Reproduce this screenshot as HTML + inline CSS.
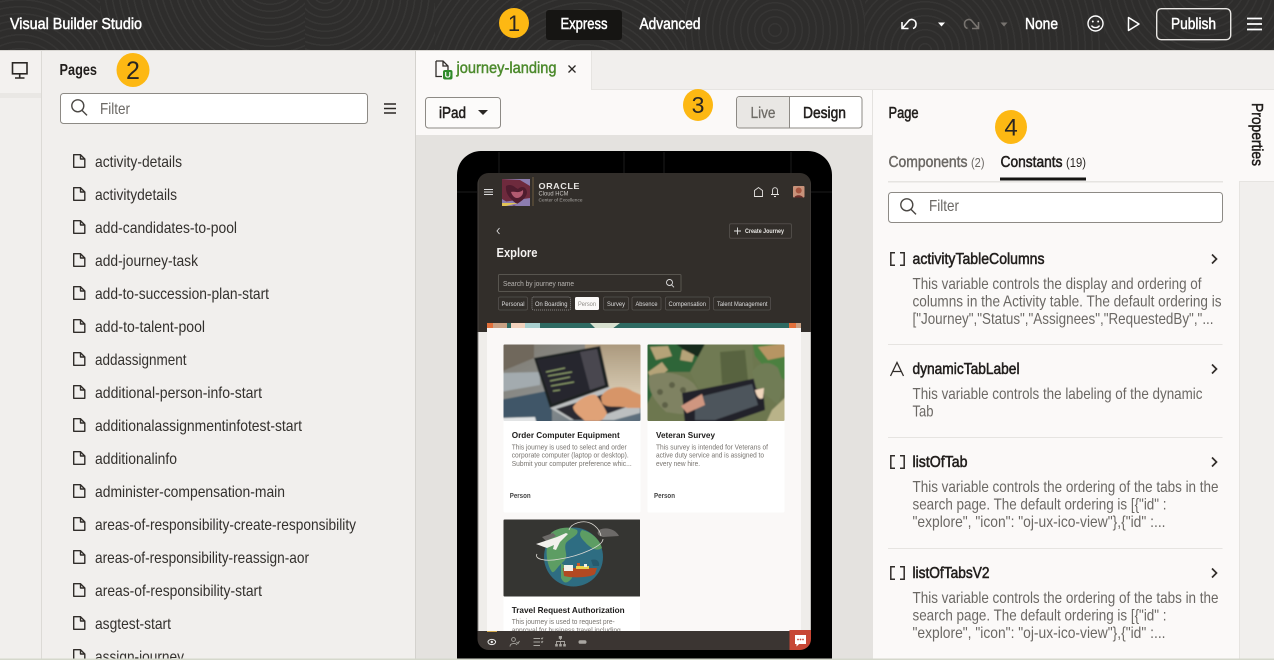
<!DOCTYPE html>
<html lang="en">
<head>
<meta charset="utf-8">
<title>Visual Builder Studio</title>
<style>
html,body{margin:0;padding:0;background:#f1efed;width:1274px;height:660px;overflow:hidden}
svg{display:block;position:absolute;left:0;top:0}
.hd{position:absolute;left:0;top:0;width:1274px;height:50px;background:#2e2d2c;overflow:hidden}
.hd div{position:absolute;top:0;height:50px}
text{font-family:"Liberation Sans",sans-serif;white-space:pre}
.l{font-size:16px;fill:#33302d}
.d{font-size:16px;fill:#6b6864}
.t{font-size:16px;fill:#211e1c;stroke:#211e1c;stroke-width:.55px}
.w{font-size:16px;fill:#fff;stroke:#fff;stroke-width:.5px}
.n{font-size:23px;fill:#2a2622;text-anchor:middle}
.chip{font-size:6px;fill:#ddd}
.ct{font-size:8.5px;font-weight:bold;fill:#1f1c1a}
.cd{font-size:7.3px;fill:#77736e}
.cp{font-size:7px;font-weight:bold;fill:#444}
</style>
</head>
<body>
<div class="hd">
<div style="left:0;width:100px;background:repeating-radial-gradient(circle at 20px 90px,#2e2d2c 0 5.5px,#363534 5.5px 7px)"></div>
<div style="left:100px;width:205px;background:repeating-radial-gradient(circle at 170px -30px,#2e2d2c 0 5.5px,#373635 5.5px 7px)"></div>
<div style="left:305px;width:130px;background:repeating-radial-gradient(circle at 20px -10px,#2e2d2c 0 5.5px,#373635 5.5px 7px)"></div>
<div style="left:435px;width:250px;background:repeating-radial-gradient(circle at 150px 100px,#2e2d2c 0 5.5px,#373635 5.5px 7px)"></div>
<div style="left:685px;width:180px;background:repeating-radial-gradient(circle at 90px 30px,#2e2d2c 0 5.5px,#363534 5.5px 7px)"></div>
<div style="left:865px;width:240px;background:repeating-radial-gradient(circle at 60px 50px,#2e2d2c 0 5.5px,#363534 5.5px 7px)"></div>
<div style="left:1105px;width:169px;background:repeating-radial-gradient(circle at 100px -20px,#2e2d2c 0 5.5px,#363534 5.5px 7px)"></div>
</div>
<svg width="1274" height="660" viewBox="0 0 1274 660" xmlns="http://www.w3.org/2000/svg">
<defs>
<path id="f" d="M.7 .7H7.5L11.8 5V13.3H.7ZM7.5 .7V5H11.8" fill="none" stroke="#312d2a" stroke-width="1.4" stroke-linejoin="round"/>
<g id="br" fill="none" stroke="#312d2a" stroke-width="1.5"><path d="M5 .8H.8V13.2H5M10 .8H14.2V13.2H10"/></g>
<path id="chev" d="M0 0L4.500 4.500L0 9" fill="none" stroke="#312d2a" stroke-width="1.700"/>
<g id="srch" fill="none" stroke="#4a4743" stroke-width="1.400"><circle cx="6.800" cy="6.800" r="6"/><path d="M11 11.400L16 16.400"/></g>
<filter id="b1" x="-5%" y="-5%" width="110%" height="110%"><feGaussianBlur stdDeviation=".35"/></filter>
<filter id="b2" x="-5%" y="-5%" width="110%" height="110%"><feGaussianBlur stdDeviation=".8"/></filter>
<clipPath id="sc"><rect x="477.500" y="173" width="333.500" height="477" rx="11"/></clipPath>
<clipPath id="c3"><rect x="503" y="519" width="137" height="112"/></clipPath>
<clipPath id="i1"><rect x="503.500" y="344.500" width="137" height="76.500" rx="1"/></clipPath>
<clipPath id="i2"><rect x="647.500" y="344.500" width="137" height="76.500" rx="1"/></clipPath>
<clipPath id="i3"><rect x="503.500" y="519.500" width="137" height="77" rx="1"/></clipPath>
<linearGradient id="lap" x1="0" y1="0" x2="1" y2="1"><stop offset="0" stop-color="#7d786d"/><stop offset=".5" stop-color="#8c8f8e"/><stop offset="1" stop-color="#55697a"/></linearGradient>
<linearGradient id="lap2" x1="0" y1="0" x2="0" y2="1"><stop offset="0" stop-color="#a8967a"/><stop offset="1" stop-color="#e0d4bd"/></linearGradient>
</defs>

<!-- base -->
<rect y="50" width="1274" height="610" fill="#f1efed"/>

<!-- header -->
<rect y="50" width="1274" height="1" fill="#d8d6d2"/>
<text class="w" x="10" y="29" textLength="132" lengthAdjust="spacingAndGlyphs">Visual Builder Studio</text>
<rect x="546" y="10" width="76" height="30" rx="3" fill="#161513"/>
<text class="w" x="560.500" y="29" textLength="47" lengthAdjust="spacingAndGlyphs">Express</text>
<text class="w" x="639.500" y="29" textLength="61" lengthAdjust="spacingAndGlyphs">Advanced</text>
<path d="M902 22V28.500H908.500M902.500 28L909 20.500C911 18.500 916 19.500 916 24C916 26.500 914.500 28 913 28.500" fill="none" stroke="#fff" stroke-width="1.600"/>
<path d="M938 22.500H945L941.500 26.500Z" fill="#fff"/>
<path d="M978.500 22V28.500H972M978 28L971.500 20.500C969.500 18.500 964.500 19.500 964.500 24C964.500 26.500 966 28 967.500 28.500" fill="none" stroke="#77736f" stroke-width="1.600"/>
<path d="M1000.500 22.500H1007.500L1004 26.500Z" fill="#77736f"/>
<text class="w" x="1025" y="29" textLength="33" lengthAdjust="spacingAndGlyphs">None</text>
<g fill="none" stroke="#fff" stroke-width="1.400">
<circle cx="1095.500" cy="23.500" r="7.500"/>
<path d="M1091.500 25.500C1093 28.300 1098 28.300 1099.500 25.500"/>
</g>
<circle cx="1092.800" cy="21.500" r="1" fill="#fff"/><circle cx="1098.200" cy="21.500" r="1" fill="#fff"/>
<path d="M1128.500 17.500L1139 24L1128.500 30.500Z" fill="none" stroke="#fff" stroke-width="1.500" stroke-linejoin="round"/>
<rect x="1156.700" y="8.700" width="74" height="31" rx="4.500" fill="none" stroke="#e8e6e3" stroke-width="1.400"/>
<text class="w" x="1171" y="29" textLength="45" lengthAdjust="spacingAndGlyphs">Publish</text>
<path d="M1247 18.500H1262M1247 24H1262M1247 29.500H1262" stroke="#fff" stroke-width="1.700"/>
<circle cx="514" cy="23" r="15" fill="#fdb813"/>
<text class="n" x="514" y="31" style="font-size:22px">1</text>

<!-- left rail -->
<rect x="41" y="51" width="1" height="609" fill="#dcdad6"/>
<rect x="0" y="51" width="41" height="42" fill="#f3f1ef"/>
<rect x="0" y="93" width="41" height="5" fill="#e9e7e4"/>
<g fill="none" stroke="#2a2724" stroke-width="1.600">
<rect x="12.500" y="62.800" width="14.500" height="11"/>
<path d="M19.700 74V78M15 78H24.500"/>
</g>

<!-- pages panel -->
<rect x="415" y="51" width="1" height="609" fill="#d4d2ce"/>
<text x="59.500" y="75" textLength="37.500" lengthAdjust="spacingAndGlyphs" style="font-size:16px;font-weight:bold;fill:#211e1c">Pages</text>
<ellipse cx="133" cy="70" rx="16.500" ry="17" fill="#fdb813"/>
<text class="n" x="133" y="79" style="font-size:25px">2</text>
<rect x="60.500" y="93.500" width="307" height="30" rx="3" fill="#fff" stroke="#8d8a85"/>
<use href="#srch" x="71" y="99"/>
<text class="d" x="100" y="114" textLength="30" lengthAdjust="spacingAndGlyphs">Filter</text>
<path d="M384 104H396M384 108.500H396M384 113H396" stroke="#2a2724" stroke-width="1.600"/>

<g>
<use href="#f" x="73" y="154"/><text class="l" x="95" y="167" textLength="87" lengthAdjust="spacingAndGlyphs">activity-details</text>
<use href="#f" x="73" y="187"/><text class="l" x="95" y="200" textLength="82" lengthAdjust="spacingAndGlyphs">activitydetails</text>
<use href="#f" x="73" y="220"/><text class="l" x="95" y="233" textLength="142" lengthAdjust="spacingAndGlyphs">add-candidates-to-pool</text>
<use href="#f" x="73" y="253"/><text class="l" x="95" y="266" textLength="103" lengthAdjust="spacingAndGlyphs">add-journey-task</text>
<use href="#f" x="73" y="286"/><text class="l" x="95" y="299" textLength="174" lengthAdjust="spacingAndGlyphs">add-to-succession-plan-start</text>
<use href="#f" x="73" y="319"/><text class="l" x="95" y="332" textLength="110" lengthAdjust="spacingAndGlyphs">add-to-talent-pool</text>
<use href="#f" x="73" y="352"/><text class="l" x="95" y="365" textLength="91.500" lengthAdjust="spacingAndGlyphs">addassignment</text>
<use href="#f" x="73" y="385"/><text class="l" x="95" y="398" textLength="167" lengthAdjust="spacingAndGlyphs">additional-person-info-start</text>
<use href="#f" x="73" y="418"/><text class="l" x="95" y="431" textLength="207" lengthAdjust="spacingAndGlyphs">additionalassignmentinfotest-start</text>
<use href="#f" x="73" y="451"/><text class="l" x="95" y="464" textLength="82" lengthAdjust="spacingAndGlyphs">additionalinfo</text>
<use href="#f" x="73" y="484"/><text class="l" x="95" y="497" textLength="190" lengthAdjust="spacingAndGlyphs">administer-compensation-main</text>
<use href="#f" x="73" y="517"/><text class="l" x="95" y="530" textLength="261" lengthAdjust="spacingAndGlyphs">areas-of-responsibility-create-responsibility</text>
<use href="#f" x="73" y="550"/><text class="l" x="95" y="563" textLength="214" lengthAdjust="spacingAndGlyphs">areas-of-responsibility-reassign-aor</text>
<use href="#f" x="73" y="583"/><text class="l" x="95" y="596" textLength="167" lengthAdjust="spacingAndGlyphs">areas-of-responsibility-start</text>
<use href="#f" x="73" y="616"/><text class="l" x="95" y="629" textLength="76" lengthAdjust="spacingAndGlyphs">asgtest-start</text>
<use href="#f" x="73" y="649"/><text class="l" x="95" y="662" textLength="89" lengthAdjust="spacingAndGlyphs">assign-journey</text>
</g>

<!-- tab strip -->
<rect x="416" y="89" width="858" height="1" fill="#e6e4e1"/>
<rect x="416" y="51" width="175" height="39" fill="#fbf9f8"/>
<rect x="591" y="51" width="1" height="39" fill="#e6e4e1"/>
<path d="M436 61H443L448 66V71M436 61V76.500H442M443 61V66H448" fill="none" stroke="#312d2a" stroke-width="1.300"/>
<rect x="443" y="70" width="9.500" height="9.500" rx="2" fill="#2f8a2a"/>
<path d="M445.700 72V75.500C445.700 77.600 449.800 77.600 449.800 75.500V72" fill="none" stroke="#fff" stroke-width="1.100"/>
<text x="456.500" y="73" textLength="100" lengthAdjust="spacingAndGlyphs" style="font-size:16px;fill:#4c8a2c;stroke:#4c8a2c;stroke-width:.45px">journey-landing</text>
<path d="M568.500 65.500L575.500 72.500M575.500 65.500L568.500 72.500" stroke="#2a2724" stroke-width="1.300"/>

<!-- toolbar -->
<rect x="416" y="90" width="457" height="45" fill="#fbf9f8"/>
<rect x="425.500" y="97.500" width="75" height="30.500" rx="3" fill="#fcfbfa" stroke="#8d8a85"/>
<text class="t" x="439" y="118" textLength="27" lengthAdjust="spacingAndGlyphs">iPad</text>
<path d="M478 110H488L483 115Z" fill="#2a2724"/>
<ellipse cx="698" cy="105" rx="15" ry="16" fill="#fdb813"/>
<text class="n" x="698" y="113">3</text>
<rect x="736.500" y="96.500" width="125.500" height="31.500" rx="3" fill="#fff" stroke="#8d8a85"/>
<path d="M739.500 97H789V127.500H739.500Q737 127.500 737 125V99.500Q737 97 739.500 97Z" fill="#e9e7e4"/>
<path d="M789.500 97V128" stroke="#8d8a85"/>
<text x="750.500" y="118" textLength="25" lengthAdjust="spacingAndGlyphs" style="font-size:16px;fill:#6f6c67;stroke:#6f6c67;stroke-width:.3px">Live</text>
<text class="t" x="803" y="118" textLength="43" lengthAdjust="spacingAndGlyphs">Design</text>

<!-- canvas -->
<rect x="416" y="135" width="457" height="525" fill="#e4e2df"/>

<!-- tablet -->
<rect x="457" y="151" width="375" height="530" rx="24" fill="#000"/>
<path d="M499 152V173M624 152V173M664 152V173M791 152V173M457 192H477M811 192H832" stroke="#1d1c1b"/>
<g clip-path="url(#sc)">
<g filter="url(#b1)">
<rect x="477" y="173" width="334" height="160" fill="#312d2a"/>
<rect x="477" y="332" width="334" height="320" fill="#efedea"/>
<path d="M478 173V650M811 173V650" stroke="#55524e" stroke-width=".6"/>
<!-- header -->
<path d="M484 189.500H493M484 192H493M484 194.500H493" stroke="#ddd" stroke-width="1"/>
<rect x="502" y="179" width="28" height="27" fill="#6e2b3d"/>
<path d="M502 179H530V186L520 180ZM502 199L514 206H502ZM503 202L530 198V206H516Z" fill="#8d7db0"/>
<path d="M506 186C512 183 515 188 518 189C521 186 526 186 527 192C527 198 520 202 517 204C511 200 505 194 506 186Z" fill="#4f1c2e"/>
<path d="M511 192C515 191 518 194 523 190C524 195 520 198 517 198C514 198 512 195 511 192Z" fill="#b25a70"/>
<path d="M502 203H518L506 206H502Z" fill="#e2c454"/>
<rect x="532.500" y="177" width="1" height="29" fill="#6d5b3f"/>
<text x="538.500" y="189" textLength="41.500" lengthAdjust="spacingAndGlyphs" style="font-size:8.500px;font-weight:bold;fill:#e8e6e3;letter-spacing:.5px">ORACLE</text>
<text x="538.500" y="195.500" textLength="30" lengthAdjust="spacingAndGlyphs" style="font-size:6px;fill:#c9c6c2">Cloud HCM</text>
<text x="538.500" y="201.500" textLength="44" lengthAdjust="spacingAndGlyphs" style="font-size:4.800px;fill:#a9a6a2">Center of Excellence</text>
<path d="M754.500 196.500V190.500L758.500 187.500L762.500 190.500V196.500Z" fill="none" stroke="#e5e3e0" stroke-width=".9"/>
<path d="M771 194.500H779M772.500 194.500V190.500C772.500 186.700 777.500 186.700 777.500 190.500V194.500M774 196.500H776" fill="none" stroke="#e5e3e0" stroke-width=".9"/>
<rect x="793" y="186" width="11.500" height="11.500" rx="1" fill="#c8927a"/>
<circle cx="798.700" cy="190.500" r="3" fill="#a5553f"/>
<path d="M794.500 197.500C795 194.500 802 194.500 803 197.500Z" fill="#6e2f2a"/>
<path d="M499.500 228L497 231L499.500 234" fill="none" stroke="#ddd" stroke-width=".9"/>
<rect x="729.500" y="223.800" width="62" height="14.500" rx="1.500" fill="none" stroke="#4f4b47"/>
<path d="M737.500 227.500V234.500M734 231H741" stroke="#ddd" stroke-width=".9"/>
<text x="745" y="233" textLength="39" lengthAdjust="spacingAndGlyphs" style="font-size:6px;font-weight:bold;fill:#e8e6e3">Create Journey</text>
<text x="496.500" y="257" textLength="41" lengthAdjust="spacingAndGlyphs" style="font-size:12.500px;font-weight:bold;fill:#f5f3f1">Explore</text>
<rect x="498.500" y="274.500" width="182.500" height="17" rx="1" fill="none" stroke="#58544f"/>
<text x="503" y="286" textLength="71" lengthAdjust="spacingAndGlyphs" style="font-size:7px;fill:#b8b5b1">Search by journey name</text>
<circle cx="669.500" cy="282.500" r="3" fill="none" stroke="#ddd" stroke-width=".9"/><path d="M671.500 284.800L674 287.300" stroke="#ddd" stroke-width=".9"/>
<g fill="none" stroke="#56524e" stroke-width=".8">
<rect x="498.500" y="297" width="29" height="13" rx="1.500"/>
<rect x="603.500" y="297" width="25" height="13" rx="1.500"/>
<rect x="632" y="297" width="29" height="13" rx="1.500"/>
<rect x="665.500" y="297" width="44" height="13" rx="1.500"/>
<rect x="713.500" y="297" width="57" height="13" rx="1.500"/>
</g>
<rect x="532" y="297" width="38.500" height="13" rx="1.500" fill="none" stroke="#aaa" stroke-width=".7" stroke-dasharray="1 1"/>
<rect x="575" y="297" width="24" height="13" rx="1.500" fill="#fbf9f8"/>
<text class="chip" x="501.500" y="306" textLength="23" lengthAdjust="spacingAndGlyphs">Personal</text>
<text class="chip" x="535" y="306" textLength="32.500" lengthAdjust="spacingAndGlyphs">On Boarding</text>
<text class="chip" x="578" y="306" textLength="18" lengthAdjust="spacingAndGlyphs" style="fill:#8d8a85">Person</text>
<text class="chip" x="607" y="306" textLength="18" lengthAdjust="spacingAndGlyphs">Survey</text>
<text class="chip" x="635.500" y="306" textLength="22" lengthAdjust="spacingAndGlyphs">Absence</text>
<text class="chip" x="668.500" y="306" textLength="37.500" lengthAdjust="spacingAndGlyphs">Compensation</text>
<text class="chip" x="717" y="306" textLength="50.500" lengthAdjust="spacingAndGlyphs">Talent Management</text>
<!-- banner -->
<rect x="487" y="323" width="314" height="6" fill="#2f6a62"/>
<path d="M487 323H493V329H487ZM789 323H801V329H789Z" fill="#e2703a"/>
<path d="M493 323H507V329H493ZM796 323H801V329H796Z" fill="#c9a184"/>
<path d="M511 323H525V329H511Z" fill="#f3d2bd"/>
<path d="M525 323H540V329H525Z" fill="#a9d0cf"/>
<path d="M590 323H620L612 329H596Z" fill="#d8e0cf"/>
<rect x="487" y="328" width="314" height="305" fill="#faf8f7"/>

<!-- card 1 -->
<rect x="503.500" y="344.500" width="137" height="168" rx="1.500" fill="#fff"/>
<g clip-path="url(#i1)"><g filter="url(#b2)">
<rect x="500" y="341" width="144" height="84" fill="url(#lap)"/>
<rect x="585" y="341" width="59" height="63" fill="url(#lap2)"/>
<path d="M500 400L552 390V425H500Z" fill="#3f5668"/>
<path d="M500 373L540 372V385L500 392Z" fill="#a3abaf"/>
<path d="M500 341H534V358L500 372Z" fill="#6f675b"/>
<path d="M534 358L600 346L609 387L550 408Z" fill="#1e2023"/>
<path d="M537 360L597 349L605 385L552 404Z" fill="#26282e"/>
<path d="M580 352L597 349L605 385L590 390Z" fill="#4a4650"/>
<path d="M546 372L565 368M548 376L572 372M550 381L570 377M551 386L574 382M553 391L560 390" stroke="#9caf74" stroke-width="1"/>
<path d="M550 408L609 387L640 405L640 413L614 420H570Z" fill="#bcbfc0"/>
<path d="M556 409L610 392L632 405L590 420H574Z" fill="#2a2c30"/>
<path d="M573 407C578 399 590 393 596 395C600 400 603 405 607 413C604 420 600 422 595 421H585C580 416 574 413 573 407Z" fill="#e0a277"/>
<path d="M601 397C606 387 622 384 632 391L644 396V408L628 408C618 405 607 409 602 403Z" fill="#d79568"/>
<path d="M500 418L535 417L537 425H500Z" fill="#e2e4e5"/>
</g></g>
<text class="ct" x="511.700" y="438" textLength="108" lengthAdjust="spacingAndGlyphs">Order Computer Equipment</text>
<text class="cd" x="511.700" y="449.500" textLength="115" lengthAdjust="spacingAndGlyphs">This journey is used to select and order</text>
<text class="cd" x="511.700" y="457.500" textLength="117" lengthAdjust="spacingAndGlyphs">corporate computer (laptop or desktop).</text>
<text class="cd" x="511.700" y="466" textLength="120" lengthAdjust="spacingAndGlyphs">Submit your computer preference whic...</text>
<text class="cp" x="509.700" y="498" textLength="21" lengthAdjust="spacingAndGlyphs">Person</text>

<!-- card 2 -->
<rect x="647.500" y="344.500" width="137" height="168" rx="1.500" fill="#fff"/>
<g clip-path="url(#i2)"><g filter="url(#b2)">
<rect x="644" y="341" width="144" height="84" fill="#6d7750"/>
<path d="M644 341H705L698 372L664 372L644 410Z" fill="#2f6537"/>
<path d="M650 347L668 346L672 356L656 360ZM648 372L662 362L668 370L652 382ZM682 350L696 349L692 362L680 360Z" fill="#b5a378"/>
<path d="M672 341L705 344L700 358L684 350Z" fill="#17291d"/>
<path d="M705 344H752L754 388L702 395L690 372Z" fill="#6f7a52"/>
<path d="M720 352L745 350L748 380L722 384Z" fill="#59643f"/>
<path d="M752 341H788V382L765 368L755 356Z" fill="#4c8040"/>
<path d="M758 347L788 343V356L768 360Z" fill="#b79564"/>
<path d="M649 376C660 370 682 372 694 384L703 397L698 413L680 414L666 412C656 402 647 392 649 376Z" fill="#7f8262"/>
<circle cx="660" cy="392" r="3" fill="#5d6146"/><circle cx="672" cy="385" r="3" fill="#5d6146"/><circle cx="683" cy="390" r="3" fill="#5d6146"/><circle cx="665" cy="405" r="3" fill="#5d6146"/>
<path d="M682 393L762 377L765 410L722 425H685Z" fill="#22232a"/>
<path d="M695 398L752 384L758 405L715 420H695Z" fill="#4e555b"/>
<path d="M752 372C757 362 770 360 778 368L784 385L778 405L766 395L756 388Z" fill="#6f7c55"/>
<path d="M755 390L764 388L763 398C760 400 757 398 755 390Z" fill="#f1d6bc"/>
<path d="M681 406L702 394L705 405L687 413Z" fill="#cf9680"/>
<path d="M772 410L788 395V425H765Z" fill="#b9b389"/>
</g></g>
<text class="ct" x="656" y="438" textLength="59" lengthAdjust="spacingAndGlyphs">Veteran Survey</text>
<text class="cd" x="656" y="449.500" textLength="112" lengthAdjust="spacingAndGlyphs">This survey is intended for Veterans of</text>
<text class="cd" x="656" y="457.500" textLength="108" lengthAdjust="spacingAndGlyphs">active duty service and is assigned to</text>
<text class="cd" x="656" y="466" textLength="44" lengthAdjust="spacingAndGlyphs">every new hire.</text>
<text class="cp" x="654" y="498" textLength="21" lengthAdjust="spacingAndGlyphs">Person</text>

<!-- card 3 -->
<g clip-path="url(#c3)">
<rect x="503.500" y="519.500" width="137" height="130" fill="#fff"/>
<g clip-path="url(#i3)">
<rect x="503" y="519" width="138" height="78" fill="#363432"/>
<circle cx="573.500" cy="557" r="29.500" fill="#2f6d82"/>
<path d="M551 533C558 527 570 526 577 530C580 535 570 538 566 543C563 550 570 556 563 562C556 568 555 573 552 572C545 562 545 544 551 533Z" fill="#5d9d64"/>
<path d="M582 530C592 532 600 540 602 548C597 552 590 548 585 542C581 538 578 534 582 530Z" fill="#5d9d64"/>
<path d="M561 563C568 568 573 570 572 578C567 584 564 584 561 578Z" fill="#5d9d64"/>
<path d="M591 560C597 558 600 562 599 566L593 566Z" fill="#255a6e"/>
<path d="M599 530C607 526 616 530 619 536L603 537C598 536 596 533 599 530Z" fill="#6c6a67"/>
<path d="M542 537L553 533L556 536L546 541Z" fill="#6c6a67"/>
<path d="M537 554C534 559 545 562 560 559C580 556 603 546 603 539M569 530C571 523 583 520 590 523C595 525 600 530 601 536" fill="none" stroke="#dcdad4" stroke-width=".8"/>
<path d="M536 544L545 541L557 537L566 533L568 534L563 539L560 542L556 550L553 549L554 545L547 548L544 547Z" fill="#f2f0ec"/>
<path d="M563 568H597L595 574C590 578 570 578 564 576Z" fill="#b24a22"/>
<rect x="564" y="565" width="9" height="6" fill="#f1efe9"/>
<path d="M576 566H589V569H576Z" fill="#e8d24f"/>
<rect x="577" y="563" width="3" height="3" fill="#c9572b"/><rect x="584" y="564" width="3" height="3" fill="#f1efe9"/>
</g>
<text class="ct" x="511.700" y="613" textLength="113" lengthAdjust="spacingAndGlyphs">Travel Request Authorization</text>
<text class="cd" x="511.700" y="624" textLength="103" lengthAdjust="spacingAndGlyphs">This journey is used to request pre-</text>
<text class="cd" x="511.700" y="632.500" textLength="109" lengthAdjust="spacingAndGlyphs">approval for business travel including</text>
</g>

<!-- bottom bar -->
<rect x="477" y="631" width="334" height="20" fill="#3a3632"/>
<rect x="487" y="631" width="10" height="1" fill="#d3a94e"/>
<ellipse cx="491.800" cy="642" rx="3.800" ry="2.600" fill="none" stroke="#ececec" stroke-width="1"/><circle cx="491.800" cy="642" r="1.200" fill="#ececec"/>
<g fill="none" stroke="#a9a6a1" stroke-width=".9">
<circle cx="513.500" cy="639.500" r="1.900"/>
<path d="M510 646.500C510 642.800 516 642.800 517 645M516.500 642L518 643.500L519.500 641"/>
<path d="M533.500 638.500H540M533.500 642H540M533.500 645.500H540M541 638L542 639L543 637.500M541 641.500L542 642.500L543 641"/>
<path d="M560.500 637.500V640M556.500 645V641.500H564.500V645M560.500 641.500V645"/>
</g>
<rect x="558.800" y="636" width="3.200" height="2.800" fill="#a9a6a1"/><rect x="555.200" y="644" width="2.600" height="2.500" fill="#a9a6a1"/><rect x="559.200" y="644" width="2.600" height="2.500" fill="#a9a6a1"/><rect x="563.200" y="644" width="2.600" height="2.500" fill="#a9a6a1"/>
<rect x="578.500" y="640.300" width="8" height="3.500" rx="1.700" fill="#a9a6a1"/>
<rect x="789.500" y="630" width="22" height="20" fill="#c74634"/>
<path d="M795 635H806V644H799L796.500 646.500V644H795Z" fill="#fff"/>
<circle cx="798" cy="639.500" r=".9" fill="#c74634"/><circle cx="800.500" cy="639.500" r=".9" fill="#c74634"/><circle cx="803" cy="639.500" r=".9" fill="#c74634"/>
</g>
</g>

<!-- right panel -->
<rect x="873" y="90" width="366" height="570" fill="#fbf9f8"/>
<rect x="872" y="90" width="1" height="570" fill="#e4e2df"/>
<rect x="1239" y="90" width="35" height="91" fill="#fbf9f8"/>
<rect x="1239" y="181" width="35" height="479" fill="#f1efed"/>
<rect x="1239" y="181" width="1" height="479" fill="#e6e4e1"/>
<rect x="1239" y="181" width="35" height="1" fill="#e6e4e1"/>
<text x="0" y="0" transform="translate(1252,103) rotate(90)" textLength="63" lengthAdjust="spacingAndGlyphs" style="font-size:16px;fill:#1f1c1a;stroke:#1f1c1a;stroke-width:.5px">Properties</text>

<text class="t" x="888.500" y="118" textLength="30" lengthAdjust="spacingAndGlyphs">Page</text>
<ellipse cx="1011" cy="127" rx="16" ry="17" fill="#fdb813"/>
<text class="n" x="1011" y="135.500" style="font-size:24px">4</text>
<text x="888.500" y="167" textLength="79" lengthAdjust="spacingAndGlyphs" style="font-size:16px;fill:#6b6864;stroke:#6b6864;stroke-width:.45px">Components</text>
<text x="971" y="167" textLength="13.500" lengthAdjust="spacingAndGlyphs" style="font-size:13px;fill:#6b6864">(2)</text>
<text class="t" x="1000.500" y="167" textLength="62" lengthAdjust="spacingAndGlyphs">Constants</text>
<text x="1066" y="167" textLength="20" lengthAdjust="spacingAndGlyphs" style="font-size:13px;fill:#2a2724">(19)</text>
<rect x="888" y="181" width="335" height="1.500" fill="#e6e4e1"/>
<rect x="1000" y="177.500" width="86" height="3" fill="#161513"/>
<rect x="888.500" y="192.500" width="334" height="30" rx="3" fill="#fff" stroke="#8d8a85"/>
<use href="#srch" x="900" y="198"/>
<text class="d" x="929" y="211" textLength="30" lengthAdjust="spacingAndGlyphs">Filter</text>

<use href="#br" x="890" y="252"/>
<text class="t" x="912.500" y="264" textLength="132" lengthAdjust="spacingAndGlyphs">activityTableColumns</text>
<use href="#chev" x="1212" y="254.500"/>
<text class="d" x="912.500" y="289" textLength="289" lengthAdjust="spacingAndGlyphs">This variable controls the display and ordering of</text>
<text class="d" x="912.500" y="306.500" textLength="309" lengthAdjust="spacingAndGlyphs">columns in the Activity table. The default ordering is</text>
<text class="d" x="912.500" y="324" textLength="301" lengthAdjust="spacingAndGlyphs">["Journey","Status","Assignees","RequestedBy","...</text>
<rect x="888" y="344" width="334.500" height="1" fill="#e6e4e1"/>

<path d="M890.500 376L897 362.500L903.500 376M892.700 371.500H901.300" fill="none" stroke="#312d2a" stroke-width="1.300"/>
<text class="t" x="912.500" y="374" textLength="107" lengthAdjust="spacingAndGlyphs">dynamicTabLabel</text>
<use href="#chev" x="1212" y="364.500"/>
<text class="d" x="912.500" y="399" textLength="290" lengthAdjust="spacingAndGlyphs">This variable controls the labeling of the dynamic</text>
<text class="d" x="912.500" y="416.500" textLength="21" lengthAdjust="spacingAndGlyphs">Tab</text>
<rect x="888" y="437" width="334.500" height="1" fill="#e6e4e1"/>

<use href="#br" x="890" y="455"/>
<text class="t" x="912.500" y="467" textLength="55" lengthAdjust="spacingAndGlyphs">listOfTab</text>
<use href="#chev" x="1212" y="457.500"/>
<text class="d" x="912.500" y="492" textLength="306" lengthAdjust="spacingAndGlyphs">This variable controls the ordering of the tabs in the</text>
<text class="d" x="912.500" y="509.500" textLength="254" lengthAdjust="spacingAndGlyphs">search page. The default ordering is [{"id" :</text>
<text class="d" x="912.500" y="527" textLength="253" lengthAdjust="spacingAndGlyphs">"explore", "icon": "oj-ux-ico-view"},{"id" :...</text>
<rect x="888" y="548" width="334.500" height="1" fill="#e6e4e1"/>

<use href="#br" x="890" y="566"/>
<text class="t" x="912.500" y="578" textLength="77" lengthAdjust="spacingAndGlyphs">listOfTabsV2</text>
<use href="#chev" x="1212" y="568.500"/>
<text class="d" x="912.500" y="603" textLength="306" lengthAdjust="spacingAndGlyphs">This variable controls the ordering of the tabs in the</text>
<text class="d" x="912.500" y="620.500" textLength="254" lengthAdjust="spacingAndGlyphs">search page. The default ordering is [{"id" :</text>
<text class="d" x="912.500" y="638" textLength="253" lengthAdjust="spacingAndGlyphs">"explore", "icon": "oj-ux-ico-view"},{"id" :...</text>

<!-- bottom edge -->
<rect x="0" y="658.500" width="1274" height="1.500" fill="#d5d8cc"/>
</svg>
</body>
</html>
